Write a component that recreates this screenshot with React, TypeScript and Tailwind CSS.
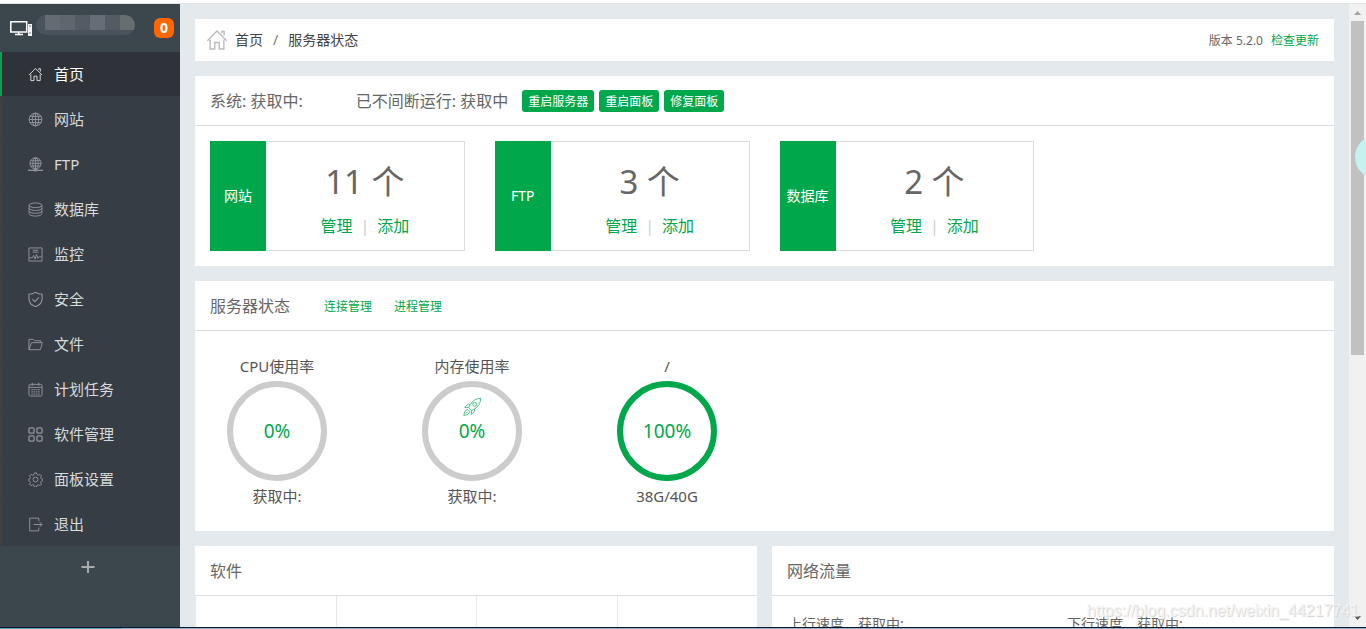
import React from "react";

const iconPaths: Record<string, React.ReactNode> = {
  home: (
    <path d="M1 8.5 8 1.5l7 7M11.5 3V1.8h1.7v3M3 7.8v6.7h3.4V9.8h3.2v4.7H13V7.8" />
  ),
  site: (
    <>
      <circle cx="8" cy="8" r="6.8" />
      <ellipse cx="8" cy="8" rx="3.4" ry="6.8" />
      <path d="M8 1.2v13.6M1.2 8h13.6M2.2 4.7h11.6M2.2 11.3h11.6" />
    </>
  ),
  ftp: (
    <>
      <circle cx="8" cy="6.8" r="6" />
      <ellipse cx="8" cy="6.8" rx="2.9" ry="6" />
      <path d="M8 .8v13M2 6.8h12M2.8 4h10.4M2.8 9.6h10.4" />
      <path d="M0 14.2h16" strokeWidth="1.4" />
      <path d="M6.5 14h3" strokeWidth="2.6" />
    </>
  ),
  database: (
    <>
      <ellipse cx="8" cy="3.5" rx="6.8" ry="2.5" />
      <path d="M1.2 3.5v9c0 1.4 3 2.5 6.8 2.5s6.8-1.1 6.8-2.5v-9M1.2 6.5C1.2 7.9 4.2 9 8 9s6.8-1.1 6.8-2.5M1.2 9.5C1.2 10.9 4.2 12 8 12s6.8-1.1 6.8-2.5" />
    </>
  ),
  monitor: (
    <>
      <path d="M1 1h14v14H1zM5 3.5h6M5 5.5h6" />
      <path d="M1.5 11.5h3L6 9l1.5 4L9 8l1.5 4 1-1.5h3" />
    </>
  ),
  shield: (
    <path
      d="M8 .3c2.2 1.5 4.6 2 7 2.1v5c0 3.7-2.8 6.6-7 8.3-4.2-1.7-7-4.6-7-8.3v-5C3.4 2.3 5.8 1.8 8 .3zM4.6 7.7l2.7 2.7 4.3-4.6"
      strokeWidth="1.2"
    />
  ),
  folder: <path d="M1 13.5v-11h4.5L7 4h6.5v2M1 13.5 3.8 6h11.5l-2.1 7.5z" />,
  calendar: (
    <>
      <rect x="1" y="2.5" width="14" height="12.5" rx="1.5" />
      <path d="M1 5.7h14M4.5 .8v3.2M11.5 .8v3.2" />
      <path
        d="M3.5 8.2h9M3.5 10.5h9M3.5 12.8h9"
        strokeDasharray="1.8 .6"
      />
    </>
  ),
  apps: (
    <g strokeWidth="1.4">
      <rect x="1" y="1" width="5.5" height="5.5" rx="1.3" />
      <rect x="9.5" y="1" width="5.5" height="5.5" rx="1.3" />
      <rect x="1" y="9.5" width="5.5" height="5.5" rx="1.3" />
      <rect x="9.5" y="9.5" width="5.5" height="5.5" rx="1.3" />
    </g>
  ),
  gear: (
    <>
      <circle cx="8" cy="8" r="2.6" />
      <path d="M6.8 1h2.4l.5 1.9 1.3.6 1.7-1 1.7 1.7-1 1.7.6 1.3 1.9.5v1.6l-1.9.6-.6 1.3 1 1.7-1.7 1.7-1.7-1-1.3.5-.5 1.9H6.8l-.5-1.9-1.3-.5-1.7 1-1.7-1.7 1-1.7-.6-1.3L.8 9.3V7.7l1.2-.5.6-1.3-1-1.7 1.7-1.7 1.7 1 1.3-.6z" />
    </>
  ),
  logout: (
    <path d="M11.5 4.5V1.2H1.8v13.6h9.7v-3.3M6 8h9M12.3 5.3 15 8l-2.7 2.7" />
  ),
};

const Icon = ({ name, className }: { name: string; className?: string }) => (
  <svg
    viewBox="0 0 16 16"
    fill="none"
    stroke="currentColor"
    className={className}
    aria-hidden="true"
  >
    {iconPaths[name]}
  </svg>
);

const menu = [
  { label: "首页", icon: "home" },
  { label: "网站", icon: "site" },
  { label: "FTP", icon: "ftp" },
  { label: "数据库", icon: "database" },
  { label: "监控", icon: "monitor" },
  { label: "安全", icon: "shield" },
  { label: "文件", icon: "folder" },
  { label: "计划任务", icon: "calendar" },
  { label: "软件管理", icon: "apps" },
  { label: "面板设置", icon: "gear" },
  { label: "退出", icon: "logout" },
];

const counters = [
  { label: "网站", count: 11 },
  { label: "FTP", count: 3 },
  { label: "数据库", count: 2 },
];

const gauges = [
  { title: "CPU使用率", value: "0%", detail: "获取中:" },
  { title: "内存使用率", value: "0%", detail: "获取中:", rocket: true },
  { title: "/", value: "100%", detail: "38G/40G", full: true },
];

const Sidebar = () => (
  <aside className="w-[180px] shrink-0 bg-[#3c464d]">
    <div className="flex h-12 items-center pl-[10px] pr-[6px]">
      <svg viewBox="0 0 23 18" className="h-[18px] w-[23px]" aria-hidden="true">
        <path
          d="M.8 2.8h15.9V13H.8zM5 15.6h8M8.8 13v3"
          fill="none"
          stroke="#fff"
          strokeWidth="1.5"
        />
        <rect x="18" y="5" width="4" height="12" fill="#f1f3f4" />
        <path d="M19 7h2M19 14h2" stroke="#7b838a" />
      </svg>
      {/* Blurred host address */}
      <div className="mb-[6px] ml-[3px] flex h-5 w-[99px] flex-col overflow-hidden rounded-full">
        <div className="flex h-[15px]">
          <span className="w-[9px] bg-[#4a535b]" />
          <span className="w-[15px] bg-[#646b73]" />
          <span className="w-[15px] bg-[#5f666e]" />
          <span className="w-[15px] bg-[#535b63]" />
          <span className="w-[15px] bg-[#676d76]" />
          <span className="w-[15px] bg-[#535b63]" />
          <span className="w-[15px] bg-[#676e70]" />
        </div>
        <div className="h-[5px] bg-[#4a535b]" />
      </div>
      <span className="ml-auto h-5 w-5 rounded-md bg-[#ff6600] text-center text-sm font-bold leading-5 text-white">
        0
      </span>
    </div>
    <nav>
      <ul className="bg-[#363d44]">
        {menu.map((item, i) => (
          <li
            key={item.icon}
            className="border-b border-[#363d44] last:border-b-0"
          >
            <a
              href="#"
              className={`flex h-11 items-center border-l-2 pl-[26px] text-[15px] ${
                i === 0
                  ? "border-[#00a84b] bg-[#2f3339] text-white"
                  : "border-[#42403f] text-[#d8dadb]"
              }`}
            >
              <Icon
                name={item.icon}
                className={`mr-[11px] h-[15px] w-[15px] ${
                  i === 0 ? "text-[#dddfe0]" : "text-[#92969a]"
                }`}
              />
              {item.label}
            </a>
          </li>
        ))}
      </ul>
    </nav>
    <button
      type="button"
      aria-label="添加"
      className="flex h-[42px] w-[175px] items-center justify-center text-[#a8acaf]"
    >
      <svg viewBox="0 0 14 14" className="h-[14px] w-[14px]">
        <path d="M7 1v12M.5 7h13" stroke="currentColor" strokeWidth="2" />
      </svg>
    </button>
  </aside>
);

const PanelTitle = ({ children }: { children: React.ReactNode }) => (
  <div className="flex h-[50px] items-center border-b border-[#dddddd] px-[15px] text-base text-[#666666]">
    {children}
  </div>
);

const Rocket = () => (
  <svg
    viewBox="0 0 20 20"
    fill="none"
    stroke="#4fc386"
    className="absolute top-[10px] h-5 w-5"
    aria-hidden="true"
  >
    <path d="M18.8 1.2c-4.5.2-8.2 2.3-10.6 6.4l-1.5 3 2.8 2.8 3-1.5c4-2.4 6.100-6.200 6.300-10.700z" />
    <circle cx="12.7" cy="7.3" r="2" />
    <path d="M8.2 7.4c-2.5-.4-4 .8-5.5 3.3l4-.2M12.5 11.9c.4 2.5-.8 4.1-3.2 5.5l.2-4M5.8 12.5c-2.4.4-3.5 2.7-4 6 3.3-.5 5.5-1.7 5.9-4zM3.7 16.5l2-2" />
  </svg>
);

const buttonClass =
  "h-[22px] rounded-[3px] bg-[#00a84b] px-[6px] pt-[2px] text-xs text-white";

const Scrollbar = () => (
  <div className="flex w-[17px] shrink-0 flex-col items-center bg-[#f1f1f1]">
    <svg viewBox="0 0 17 17" className="h-[17px] w-[17px]">
      <path d="M5 11h7L8.5 7z" fill="#a3a3a3" />
    </svg>
    <div className="h-[334px] w-[13px] bg-[#c1c1c1]" />
    <svg viewBox="0 0 17 17" className="mt-auto h-[17px] w-[17px]">
      <path d="M5 6h7l-3.5 4z" fill="#505050" />
    </svg>
  </div>
);

const App = () => {
  return (
    <div className="relative flex h-screen flex-col overflow-hidden bg-white font-['Noto_Sans','Noto_Sans_CJK_SC',sans-serif]">
      <div className="h-1 shrink-0 border-b border-[#e3e3e3]" />
      <div className="flex min-h-0 flex-1 overflow-hidden">
        <Sidebar />
        <main className="flex min-w-0 flex-1 flex-col gap-[15px] overflow-hidden bg-[#e4e9ed] p-[15px]">
          {/* Breadcrumb */}
          <div className="flex h-[42px] shrink-0 items-center bg-white px-[15px] text-sm text-[#444444]">
            <Icon
              name="home"
              className="-ml-1 mr-[7px] h-[22px] w-[22px] text-[#bbbbbb]"
            />
            <a href="#">首页</a>
            <span className="px-[10px] text-[#777777]">/</span>
            <a href="#">服务器状态</a>
            <span className="ml-auto pt-[2px] text-xs text-[#666666]">
              版本 5.2.0
            </span>
            <a href="#" className="ml-2 pt-[2px] text-xs text-[#00a84b]">
              检查更新
            </a>
          </div>

          {/* System */}
          <section className="shrink-0 bg-white">
            <PanelTitle>
              <span>系统: 获取中:</span>
              <span className="ml-[53px] mr-[14px]">
                已不间断运行: 获取中
              </span>
              <div className="flex gap-[5px]">
                <button type="button" className={buttonClass}>
                  重启服务器
                </button>
                <button type="button" className={buttonClass}>
                  重启面板
                </button>
                <button type="button" className={buttonClass}>
                  修复面板
                </button>
              </div>
            </PanelTitle>
            <div className="grid grid-cols-4 py-[15px]">
              {counters.map((c) => (
                <div key={c.label} className="px-[15px]">
                  <div className="flex h-[110px]">
                    <div className="flex w-14 items-center justify-center bg-[#00a84b] text-sm text-white">
                      {c.label}
                    </div>
                    <div className="flex-1 border border-l-0 border-[#dddddd] pt-4 text-center text-[#666666]">
                      <p className="text-[33px] leading-[48px]">{c.count} 个</p>
                      <p className="mt-2 flex justify-center gap-2 text-base leading-6">
                        <a href="#" className="text-[#00a84b]">
                          管理
                        </a>
                        <span className="text-[#cccccc]">|</span>
                        <a href="#" className="text-[#00a84b]">
                          添加
                        </a>
                      </p>
                    </div>
                  </div>
                </div>
              ))}
            </div>
          </section>

          {/* Server status */}
          <section className="shrink-0 bg-white">
            <PanelTitle>
              <h2>服务器状态</h2>
              <a href="#" className="ml-[34px] pt-[2px] text-xs text-[#00a84b]">
                连接管理
              </a>
              <a href="#" className="ml-[22px] pt-[2px] text-xs text-[#00a84b]">
                进程管理
              </a>
            </PanelTitle>
            <ul className="flex h-[200px] gap-[61px] px-[15px] pt-6">
              {gauges.map((g) => (
                <li
                  key={g.title}
                  className="flex w-[134px] flex-col items-center text-[15px] text-[#555555]"
                >
                  <h3 className="h-[26px] leading-[22px]">{g.title}</h3>
                  <div
                    className={`relative flex h-[100px] w-[100px] items-center justify-center rounded-full border-[6px] text-[19px] text-[#00a84b] ${
                      g.full ? "border-[#00a84b]" : "border-[#cccccc]"
                    }`}
                  >
                    {g.rocket && <Rocket />}
                    <span>{g.value}</span>
                  </div>
                  <p className="mt-1 leading-[22px]">{g.detail}</p>
                </li>
              ))}
            </ul>
          </section>

          <div className="grid shrink-0 grid-cols-2 gap-[15px]">
            <section className="bg-white">
              <PanelTitle>
                <h2>软件</h2>
              </PanelTitle>
              <div className="grid h-[140px] grid-cols-4">
                <div className="border-l border-[#e8e8f5]" />
                <div className="border-l border-[#e8e8f5]" />
                <div className="border-l border-[#e8e8f5]" />
                <div className="border-l border-[#e8e8f5]" />
              </div>
            </section>
            <section className="bg-white">
              <PanelTitle>
                <h2>网络流量</h2>
              </PanelTitle>
              <div className="grid grid-cols-2 px-4 pt-4 text-sm leading-6 text-[#666666]">
                <p className="flex gap-[14px]">
                  <span>上行速度</span>
                  <span>获取中:</span>
                </p>
                <p className="flex gap-[14px] pl-[14px]">
                  <span>下行速度</span>
                  <span>获取中:</span>
                </p>
              </div>
            </section>
          </div>
        </main>
        <Scrollbar />
      </div>
      {/* Top edge of the taskbar */}
      <div className="flex h-[2px] shrink-0 border-t border-[#0d1a26]">
        <span className="w-[122px] bg-[#5a9fc4]" />
        <span className="flex-1 bg-[#8fb0d6]" />
      </div>

      {/* Floating helper ball */}
      <div className="absolute -right-[33px] top-[135px] h-11 w-11 rounded-full bg-[#c4f2ee]" />
      <span className="absolute bottom-[6px] right-[7px] font-['Liberation_Sans',sans-serif] text-base leading-6 text-[#f4f4f4] [text-shadow:1px_1px_1px_#d0d0d0]">
        https://blog.csdn.net/weixin_44217741
      </span>
    </div>
  );
};

export default App;
